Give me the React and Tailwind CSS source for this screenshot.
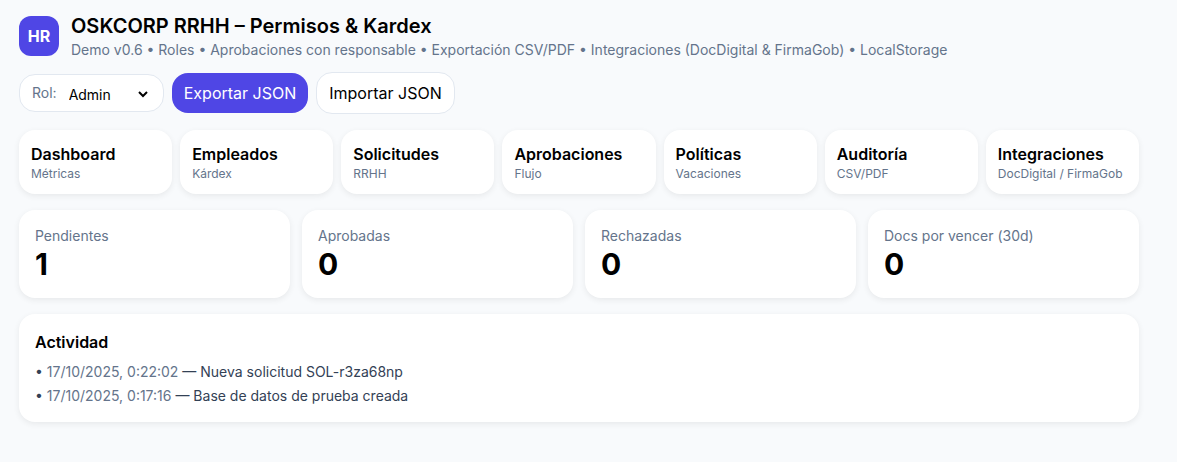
import React from 'react';

const tabs = [
  { title: 'Dashboard', sub: 'Métricas' },
  { title: 'Empleados', sub: 'Kárdex' },
  { title: 'Solicitudes', sub: 'RRHH' },
  { title: 'Aprobaciones', sub: 'Flujo' },
  { title: 'Políticas', sub: 'Vacaciones' },
  { title: 'Auditoría', sub: 'CSV/PDF' },
  { title: 'Integraciones', sub: 'DocDigital / FirmaGob' },
];

const stats = [
  { label: 'Pendientes', value: 1 },
  { label: 'Aprobadas', value: 0 },
  { label: 'Rechazadas', value: 0 },
  { label: 'Docs por vencer (30d)', value: 0 },
];

const activity = [
  { date: '17/10/2025, 0:22:02', text: 'Nueva solicitud SOL-r3za68np' },
  { date: '17/10/2025, 0:17:16', text: 'Base de datos de prueba creada' },
];

const App = () => {
  return (
    <div className="min-h-[462px] bg-[#f8fafc] font-['Inter',sans-serif] text-black">
      <div className="w-[1120px] ml-[19px] pt-3">
        {/* Header */}
        <div className="flex items-center gap-3">
          <div className="w-10 h-10 rounded-xl bg-[#4f46e5] text-white font-bold flex items-center justify-center">HR</div>
          <div>
            <h1 className="text-xl font-semibold">OSKCORP RRHH – Permisos &amp; Kardex</h1>
            <p className="text-sm text-[#64748b]">
              Demo v0.6 • Roles • Aprobaciones con responsable • Exportación CSV/PDF • Integraciones (DocDigital &amp; FirmaGob) • LocalStorage
            </p>
          </div>
        </div>

        {/* Toolbar */}
        <div className="mt-3 flex items-center gap-2">
          <div className="flex items-center gap-2 w-[145px] h-[38px] pl-3 pr-3 bg-white border border-[#e2e8f0] rounded-2xl">
            <span className="text-sm text-[#64748b]">Rol:</span>
            <select className="flex-1 min-w-0 mt-[2px] bg-transparent text-sm outline-none">
              <option>Admin</option>
              <option>RRHH</option>
              <option>Jefatura</option>
            </select>
          </div>
          <button className="w-[136px] h-10 rounded-2xl bg-[#4f46e5] text-white">Exportar JSON</button>
          <button className="w-[139px] h-[42px] rounded-2xl bg-white border border-[#e2e8f0]">Importar JSON</button>
        </div>

        {/* Tabs */}
        <div className="mt-4 grid grid-cols-7 gap-2">
          {tabs.map((tab) => (
            <div key={tab.title} className="px-3 py-3 rounded-2xl bg-white shadow-[0_2px_6px_rgba(0,0,0,0.07)]">
              <div className="font-semibold leading-6">{tab.title}</div>
              <div className="text-xs leading-4 text-[#64748b]">{tab.sub}</div>
            </div>
          ))}
        </div>

        {/* Stats */}
        <div className="mt-4 grid grid-cols-4 gap-3">
          {stats.map((stat) => (
            <div key={stat.label} className="p-4 rounded-2xl bg-white shadow-[0_2px_6px_rgba(0,0,0,0.07)]">
              <div className="text-sm text-[#64748b]">{stat.label}</div>
              <div className="text-3xl font-bold">{stat.value}</div>
            </div>
          ))}
        </div>

        {/* Activity */}
        <div className="mt-4 p-4 rounded-2xl bg-white shadow-[0_2px_6px_rgba(0,0,0,0.07)]">
          <h2 className="font-semibold">Actividad</h2>
          <ul className="mt-2 space-y-1 text-sm text-[#334155]">
            {activity.map((item) => (
              <li key={item.date}>
                • <span className="text-[#64748b]">{item.date}</span> — {item.text}
              </li>
            ))}
          </ul>
        </div>
      </div>
    </div>
  );
};

export default App;
